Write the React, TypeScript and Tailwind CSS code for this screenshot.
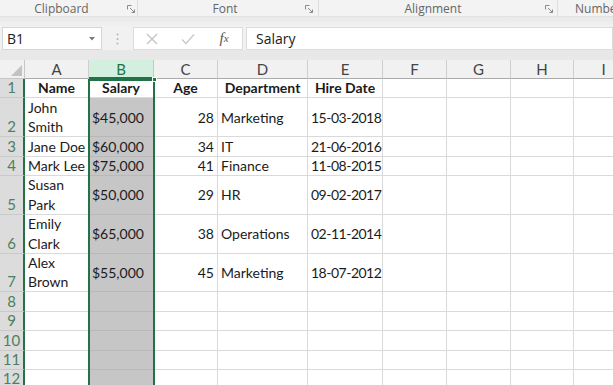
const cols = [
  { key: 'A', w: 'w-[64px]' },
  { key: 'B', w: 'w-[65px]' },
  { key: 'C', w: 'w-[64px]' },
  { key: 'D', w: 'w-[90px]' },
  { key: 'E', w: 'w-[75px]' },
  { key: 'F', w: 'w-[64px]' },
  { key: 'G', w: 'w-[64px]' },
  { key: 'H', w: 'w-[63px]' },
  { key: 'I', w: 'w-[60px]' },
];

type Row = { n: number; tall?: boolean; name?: string[]; salary?: string; age?: string; dept?: string; date?: string };

const rows: Row[] = [
  { n: 2, tall: true, name: ['John', 'Smith'], salary: '$45,000', age: '28', dept: 'Marketing', date: '15-03-2018' },
  { n: 3, name: ['Jane Doe'], salary: '$60,000', age: '34', dept: 'IT', date: '21-06-2016' },
  { n: 4, name: ['Mark Lee'], salary: '$75,000', age: '41', dept: 'Finance', date: '11-08-2015' },
  { n: 5, tall: true, name: ['Susan', 'Park'], salary: '$50,000', age: '29', dept: 'HR', date: '09-02-2017' },
  { n: 6, tall: true, name: ['Emily', 'Clark'], salary: '$65,000', age: '38', dept: 'Operations', date: '02-11-2014' },
  { n: 7, tall: true, name: ['Alex', 'Brown'], salary: '$55,000', age: '45', dept: 'Marketing', date: '18-07-2012' },
  { n: 8 },
  { n: 9 },
  { n: 10 },
  { n: 11 },
  { n: 12 },
];

function Launcher() {
  return (
    <svg width="8" height="8" viewBox="0 0 8 8" className="text-[#8a8a8a]">
      <path d="M0.5 0.5h4M0.5 0.5v4M3 3l4.5 4.5M4.5 7.5h3v-3" stroke="currentColor" strokeWidth="1" fill="none" />
    </svg>
  );
}

function RowHead({ n, tall }: { n: number; tall?: boolean }) {
  return (
    <div
      className={`w-[25px] shrink-0 flex items-end justify-center pb-[1px] bg-[#dcdcdc] text-[#4f7f5d] text-[15px] leading-[17px] border-b border-[#c9c9c9] border-r-2 border-r-[#217346] ${
        tall ? 'h-[38.8px]' : 'h-[19.4px]'
      }`}
    >
      {n}
    </div>
  );
}

export default function App() {
  return (
    <div className="w-[613px] h-[385px] overflow-hidden bg-white font-['Lato',sans-serif] text-[#1b1b1b] select-none">
      {/* ribbon group labels */}
      <div className="h-[17px] flex bg-[#f3f3f3] text-[12px] text-[#666] font-['Open_Sans',sans-serif] leading-[17px] border-b border-[#e2e2e2] whitespace-nowrap">
        <div className="w-[137px] relative flex justify-center pr-[14px]">
          Clipboard
          <span className="absolute right-[2px] top-[5px]"><Launcher /></span>
        </div>
        <div className="w-[181px] relative flex justify-center border-l border-[#dedede] pr-[6px]">
          Font
          <span className="absolute right-[5px] top-[5px]"><Launcher /></span>
        </div>
        <div className="w-[239px] relative flex justify-center border-l border-[#dedede] pr-[10px]">
          Alignment
          <span className="absolute right-[4px] top-[5px]"><Launcher /></span>
        </div>
        <div className="flex-1 overflow-hidden border-l border-[#dedede] pl-[17px]">Number</div>
      </div>
      <div className="h-[10px] bg-gradient-to-b from-[#e9e9e9] to-[#f1f1f1]" />

      {/* formula bar */}
      <div className="h-[23px] flex items-stretch bg-[#f1f1f1] font-['Open_Sans',sans-serif]">
        <div className="ml-[2px] w-[100px] bg-white border border-[#d6d6d6] flex items-center justify-between pl-[4px] pr-[6px] text-[14px] text-[#222]">
          <span>B1</span>
          <svg width="6" height="4" viewBox="0 0 6 4">
            <path d="M0 0h6L3 3.5Z" fill="#7a7a7a" />
          </svg>
        </div>
        <div className="w-[31px] flex items-center justify-center text-[#b5b5b5]">
          <svg width="3" height="12" viewBox="0 0 3 12">
            <circle cx="1.5" cy="1.5" r="1" fill="currentColor" />
            <circle cx="1.5" cy="6" r="1" fill="currentColor" />
            <circle cx="1.5" cy="10.5" r="1" fill="currentColor" />
          </svg>
        </div>
        <div className="w-[110px] bg-white border border-[#dcdcdc] flex items-center">
          <div className="w-[36px] flex justify-center">
            <svg width="12" height="12" viewBox="0 0 12 12">
              <path d="M1 1l10 10M11 1L1 11" stroke="#c2c2c2" strokeWidth="1.3" />
            </svg>
          </div>
          <div className="w-[36px] flex justify-center">
            <svg width="14" height="12" viewBox="0 0 14 12">
              <path d="M1 6.5l4 4L13 1.5" stroke="#c8c8c8" strokeWidth="1.3" fill="none" />
            </svg>
          </div>
          <div className="w-[36px] flex justify-center font-['Liberation_Serif',serif] italic text-[15px] text-[#555]">
            f<span className="text-[11px] mt-[3px]">x</span>
          </div>
        </div>
        <div className="ml-[3px] flex-1 bg-white border border-[#dcdcdc] flex items-center pl-[9px] text-[14px] text-[#222]">
          Salary
        </div>
      </div>
      <div className="h-[10px] bg-[#e8e8e8]" />

      {/* grid */}
      <div className="relative">
        {/* column headers */}
        <div className="flex h-[19px] bg-[#f1f1f1] text-[15px] text-[#444] leading-[18px]">
          <div className="w-[25px] shrink-0 relative border-r border-b border-[#c6c6c6]">
            <svg width="11" height="11" viewBox="0 0 11 11" className="absolute right-[2px] bottom-[2px]">
              <path d="M11 0V11H0Z" fill="#c2c2c2" />
            </svg>
          </div>
          {cols.map((c) =>
            c.key === 'B' ? (
              <div key={c.key} className={`${c.w} shrink-0 flex justify-center bg-[#d3efdf] text-[#217346] border-r border-[#c6c6c6] border-b-2 border-b-[#217346]`}>
                {c.key}
              </div>
            ) : (
              <div key={c.key} className={`${c.w} shrink-0 flex justify-center border-r border-b border-[#cfcfcf] border-b-[#ababab]`}>
                {c.key}
              </div>
            )
          )}
        </div>

        {/* header row */}
        <div className="flex text-[14px]">
          <RowHead n={1} />
          {['Name', 'Salary', 'Age', 'Department', 'Hire Date', '', '', '', ''].map((t, i) => (
            <div
              key={i}
              className={`${cols[i].w} shrink-0 h-[19.4px] flex items-center justify-center font-bold leading-[18px] border-r border-b border-[#dadada] whitespace-nowrap`}
            >
              {t}
            </div>
          ))}
        </div>

        {rows.map((r) => {
          const h = r.tall ? 'h-[38.8px]' : 'h-[19.4px]';
          return (
            <div key={r.n} className="flex text-[14px] leading-[19.4px] whitespace-nowrap">
              <RowHead n={r.n} tall={r.tall} />
              <div className={`${cols[0].w} shrink-0 ${h} pl-[3px] flex flex-col justify-center border-r border-b border-[#dadada]`}>
                {r.name?.map((l) => <span key={l}>{l}</span>)}
              </div>
              <div className={`${cols[1].w} shrink-0 ${h} pl-[3px] flex items-center bg-[#c6c6c6] border-r border-b border-[#b8b8b8]`}>
                {r.salary}
              </div>
              <div className={`${cols[2].w} shrink-0 ${h} pr-[3px] flex items-center justify-end border-r border-b border-[#dadada]`}>
                {r.age}
              </div>
              <div className={`${cols[3].w} shrink-0 ${h} pl-[3px] flex items-center border-r border-b border-[#dadada]`}>
                {r.dept}
              </div>
              <div className={`${cols[4].w} shrink-0 ${h} pl-[3px] flex items-center tracking-[-0.5px] border-r border-b border-[#dadada]`}>
                {r.date}
              </div>
              {cols.slice(5).map((c) => (
                <div key={c.key} className={`${c.w} shrink-0 ${h} border-r border-b border-[#dadada]`} />
              ))}
            </div>
          );
        })}

        {/* column B selection outline */}
        <div className="absolute left-[88px] top-[19px] w-[67px] h-[400px] border-2 border-[#217346] pointer-events-none" />
        <div className="absolute left-[152px] top-[17px] w-[5px] h-[5px] bg-[#217346] border border-white" />
      </div>
    </div>
  );
}
